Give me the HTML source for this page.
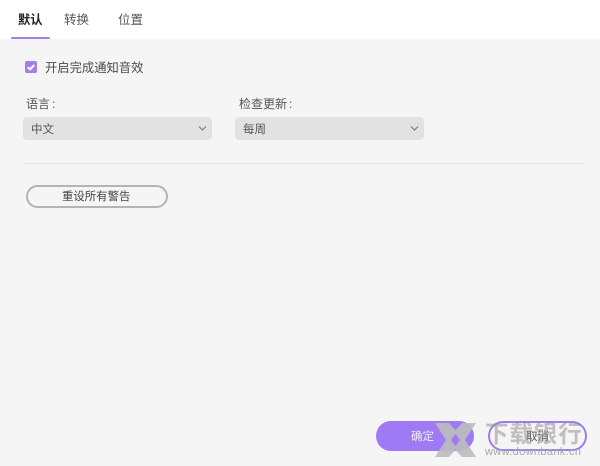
<!DOCTYPE html>
<html lang="zh">
<head>
<meta charset="utf-8">
<style>
html,body{margin:0;padding:0;background:#f5f5f5}
body{width:600px;height:466px;overflow:hidden;position:relative;font-family:"Liberation Sans","Noto Sans CJK SC",sans-serif;color:#444;font-size:12px}
#w{position:absolute;left:0;top:0;width:600px;height:466px;background:#f5f5f5;filter:blur(.3px);overflow:hidden}
.a{position:absolute;white-space:nowrap;line-height:16px}
.top{position:absolute;left:0;top:0;width:600px;height:39px;background:#fff}
.sel{position:absolute;top:117px;height:23px;background:#e2e2e2;border-radius:4px}
.c{margin-left:2px}
</style>
</head>
<body>
<div id="w">
<div class="top"></div>
<div class="a" style="left:18px;top:12px;font-size:12.3px;color:#222;font-weight:700">默认</div>
<div class="a" style="left:64px;top:12px;font-size:12.5px;color:#555">转换</div>
<div class="a" style="left:118px;top:12px;font-size:12.5px;color:#555">位置</div>
<div style="position:absolute;left:11px;top:37px;width:39px;height:2px;background:#a57fe8;border-radius:1px"></div>

<div style="position:absolute;left:24.5px;top:61px;width:12px;height:12px;background:#a57fe8;border-radius:2px"></div>
<svg style="position:absolute;left:24.5px;top:61px" width="12" height="12" viewBox="0 0 12 12"><path d="M2.8 6.2L5.1 8.3L9.3 4" fill="none" stroke="#fff" stroke-width="2"/></svg>
<div class="a" style="left:45px;top:60px;font-size:12.3px;color:#4a4a4a">开启完成通知音效</div>

<div class="a" style="left:26px;top:96px;color:#555">语言<span class="c">:</span></div>
<div class="sel" style="left:23px;width:189px"></div>
<div class="a" style="left:31px;top:122px;font-size:11.5px;color:#555">中文</div>
<svg style="position:absolute;left:198px;top:125px" width="9" height="7" viewBox="0 0 9 7"><path d="M1 1.5L4.5 5L8 1.5" fill="none" stroke="#777" stroke-width="1.1"/></svg>

<div class="a" style="left:239px;top:96px;color:#555">检查更新<span class="c">:</span></div>
<div class="sel" style="left:235px;width:189px"></div>
<div class="a" style="left:243px;top:122px;font-size:11.5px;color:#555">每周</div>
<svg style="position:absolute;left:410px;top:125px" width="9" height="7" viewBox="0 0 9 7"><path d="M1 1.5L4.5 5L8 1.5" fill="none" stroke="#777" stroke-width="1.1"/></svg>

<div style="position:absolute;left:23px;top:163px;width:560px;height:1px;background:#e3e3e3"></div>

<div style="position:absolute;left:26px;top:185px;width:138px;height:19px;border:2px solid #b4b4b4;border-radius:12px"></div>
<div class="a" style="left:62px;top:189px;font-size:11.4px;color:#444">重设所有警告</div>

<div style="position:absolute;left:376px;top:421px;width:98px;height:30px;background:#9e7bf5;border-radius:15px"></div>
<div class="a" style="left:411px;top:429px;font-size:11.5px;color:#eee">确定</div>
<div style="position:absolute;left:488px;top:421px;width:95px;height:26px;border:2px solid #9e7bf5;border-radius:15px"></div>
<div class="a" style="left:526px;top:429px;font-size:11.5px;color:#555">取消</div>

<svg style="position:absolute;left:435px;top:423px" width="41" height="35" viewBox="0 0 41 35"><path fill-rule="evenodd" d="M0 0H14L20.500 7L27 0H41L30 17L41 34H27L20.500 27L14 34H0L11 17ZM20.500 11L16 17L20.500 23L25 17Z" fill="#bdbdbd" fill-opacity=".9"/></svg>
<div class="a" style="left:485px;top:420px;font-size:23.500px;line-height:28px;letter-spacing:.9px;font-weight:700;color:#8a8a8a;opacity:.5">下载银行</div>
<div class="a" style="left:485px;top:446px;font-size:11px;line-height:12px;letter-spacing:.35px;color:#a8a8a8">www.downbank.cn</div>
</div>
</body>
</html>
